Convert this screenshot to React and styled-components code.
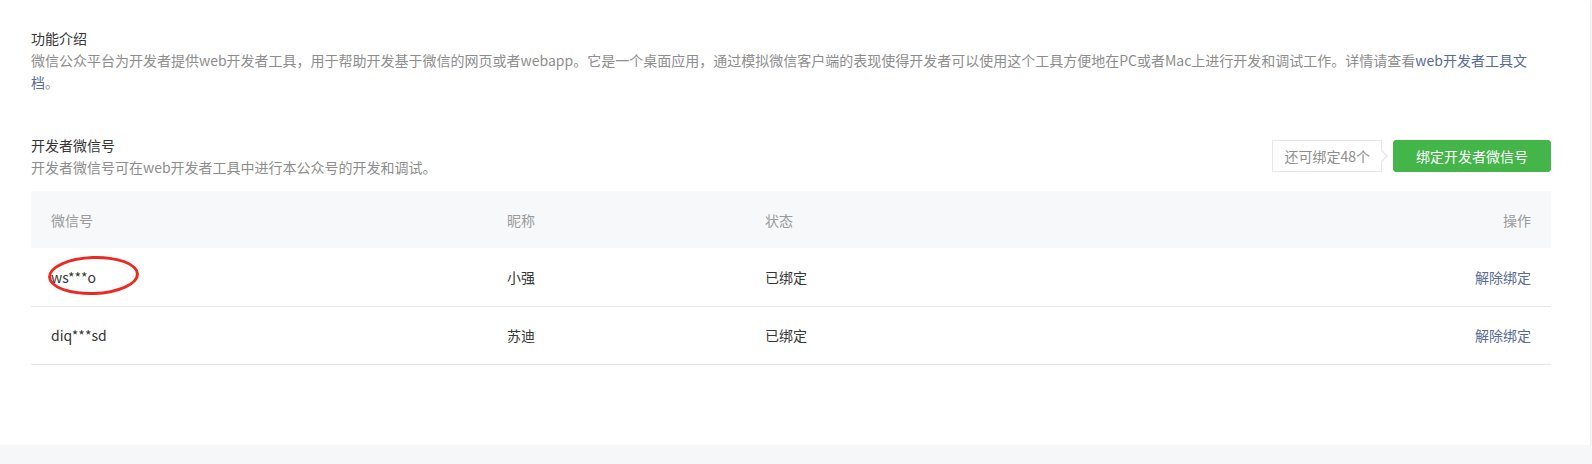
import React from "react";
import styled, { createGlobalStyle } from "styled-components";

const GlobalStyle = createGlobalStyle`
  html, body {
    margin: 0;
    padding: 0;
    background: #f6f7f9;
  }
  body {
    font-family: "Microsoft YaHei", "Noto Sans CJK SC", "Noto Sans", sans-serif;
    font-size: 14px;
    color: #353535;
  }
`;

const Card = styled.div`
  box-sizing: border-box;
  width: 1590px;
  background: #fff;
  padding: 27px 39px 80px 31px;
  box-shadow: 0 1px 2px rgba(150, 150, 150, 0.25);
`;

const Title = styled.h3`
  margin: 0;
  font-size: 14px;
  font-weight: normal;
  line-height: 22px;
  color: #353535;
`;

const Desc = styled.p`
  margin: 0;
  font-size: 14px;
  line-height: 22px;
  color: #8d8d8d;
  max-width: ${(p) => p.$maxWidth || "none"};
`;

const Link = styled.a`
  color: #576b95;
  text-decoration: none;
  cursor: pointer;
`;

const SectionHead = styled.div`
  margin-top: 41px;
  display: flex;
  justify-content: space-between;
  align-items: center;
`;

const Actions = styled.div`
  display: flex;
  align-items: center;
  gap: 11px;
`;

const Counter = styled.div`
  position: relative;
  box-sizing: border-box;
  height: 32px;
  line-height: 30px;
  padding: 0 11px;
  border: 1px solid #e4e8eb;
  color: #8d8d8d;
  background: #fff;

  &::before,
  &::after {
    content: "";
    position: absolute;
    top: 50%;
    width: 0;
    height: 0;
    border-style: solid;
    border-color: transparent;
  }
  &::before {
    right: -7px;
    margin-top: -6px;
    border-width: 6px 0 6px 6px;
    border-left-color: #e4e8eb;
  }
  &::after {
    right: -5px;
    margin-top: -5px;
    border-width: 5px 0 5px 5px;
    border-left-color: #fff;
  }
`;

const PrimaryButton = styled.button`
  box-sizing: border-box;
  height: 32px;
  width: 158px;
  border: 1px solid #43b548;
  border-radius: 3px;
  background: #44b549;
  color: #fff;
  font-family: inherit;
  font-size: 14px;
  line-height: 30px;
  padding: 0;
  cursor: pointer;
`;

const Table = styled.table`
  margin-top: 13px;
  width: 100%;
  border-collapse: collapse;
  table-layout: fixed;
`;

const Col = styled.col`
  width: ${(p) => p.$width || "auto"};
`;

const Th = styled.th`
  box-sizing: border-box;
  height: 57px;
  padding: 0 20px;
  background: #f6f8f9;
  color: #9a9a9a;
  font-weight: normal;
  text-align: ${(p) => p.$align || "left"};
`;

const Td = styled.td`
  box-sizing: border-box;
  height: 58px;
  padding: 0 20px;
  border-bottom: 1px solid #e7e7eb;
  color: #353535;
  text-align: ${(p) => p.$align || "left"};
`;

const Marked = styled.span`
  position: relative;
  display: inline-block;
  line-height: 22px;
`;

const RedCircle = styled.span`
  position: absolute;
  left: -3px;
  top: -10px;
  width: 91px;
  height: 39px;
  box-sizing: border-box;
  border: 3px solid #ec2a22;
  border-radius: 50%;
  transform: rotate(-2deg);
  pointer-events: none;
`;

const rows = [
  { id: "ws***o", nick: "小强", status: "已绑定", marked: true },
  { id: "diq***sd", nick: "苏迪", status: "已绑定" },
];

export default function App() {
  return (
    <>
      <GlobalStyle />
      <Card>
        <Title>功能介绍</Title>
        <Desc $maxWidth="1505px">
          微信公众平台为开发者提供web开发者工具，用于帮助开发基于微信的网页或者webapp。它是一个桌面应用，通过模拟微信客户端的表现使得开发者可以使用这个工具方便地在PC或者Mac上进行开发和调试工作。详情请查看
          <Link>web开发者工具文档</Link>。
        </Desc>

        <SectionHead>
          <div>
            <Title>开发者微信号</Title>
            <Desc>开发者微信号可在web开发者工具中进行本公众号的开发和调试。</Desc>
          </div>
          <Actions>
            <Counter>还可绑定48个</Counter>
            <PrimaryButton>绑定开发者微信号</PrimaryButton>
          </Actions>
        </SectionHead>

        <Table>
          <colgroup>
            <Col $width="456px" />
            <Col $width="258px" />
            <Col />
            <Col $width="200px" />
          </colgroup>
          <thead>
            <tr>
              <Th>微信号</Th>
              <Th>昵称</Th>
              <Th>状态</Th>
              <Th $align="right">操作</Th>
            </tr>
          </thead>
          <tbody>
            {rows.map((r) => (
              <tr key={r.id}>
                <Td>
                  {r.marked ? (
                    <Marked>
                      {r.id}
                      <RedCircle />
                    </Marked>
                  ) : (
                    r.id
                  )}
                </Td>
                <Td>{r.nick}</Td>
                <Td>{r.status}</Td>
                <Td $align="right">
                  <Link>解除绑定</Link>
                </Td>
              </tr>
            ))}
          </tbody>
        </Table>
      </Card>
    </>
  );
}
